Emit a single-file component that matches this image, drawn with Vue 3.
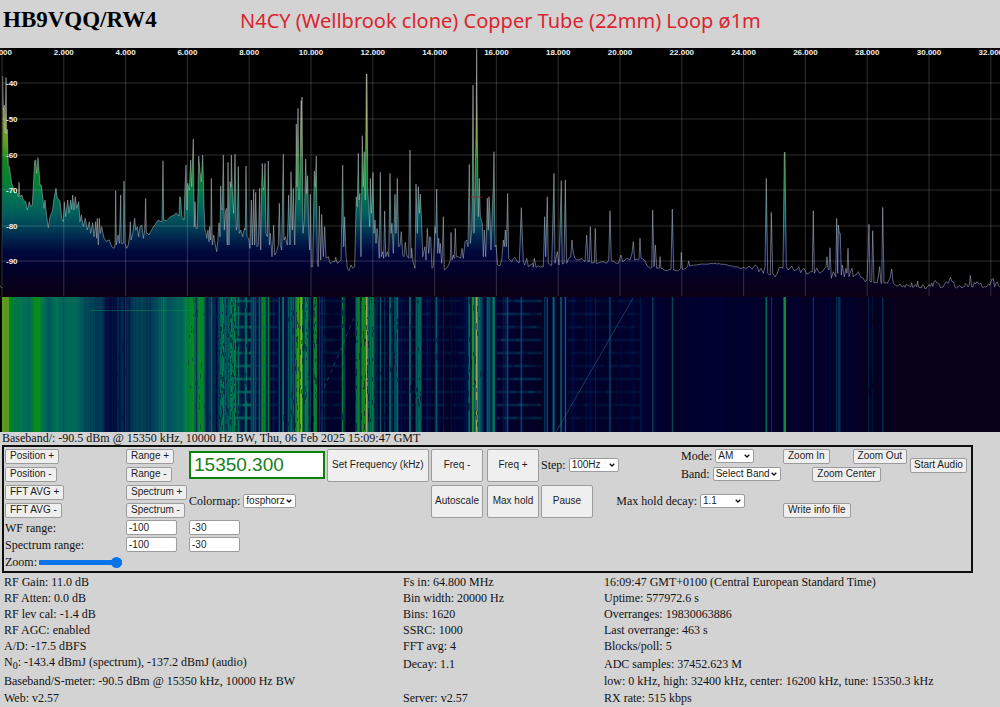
<script setup>
import { ref } from 'vue'

// Trace samples as x,y pairs on a grid three times finer than the plot, one string per third of the band.
const sections = [
  `8,228;10,330;13,315;16,400;18,232;20,400;22,388;25,500;28,500;35,550;45,580;50,575;55,590;57,547;60,590;66,585;70,600;77,605;82,630;88,605;92,620;97,615;100,560;104,482;107,480;110,520;114,473;117,510;120,555;124,555;127,580;132,625;135,600;140,650;145,683;150,650;158,630;162,595;168,565;172,595;180,605;185,655;190,665;193,605;197,650;203,600;207,640;212,600;215,628;218,585;222,630;226,590;230,625;236,605;240,665;244,645;250,680;256,655;262,690;268,665;272,700;278,668;282,710;287,665;290,715;292,655;295,735;298,655;301,700;305,680;312,715;320,725;328,720;335,740;342,745;345,735;347,572;349,735;354,705;358,730;362,585;364,730;370,730;372,543;375,730;380,745;385,735;389,705;391,665;393,720;398,700;404,655;407,690;412,680;416,710;420,680;425,675;430,715;434,690;437,595;439,700;447,705;455,690;465,675;475,660;486,665;489,482;491,660;500,662;515,648;530,640;537,648;539,590;542,595;545,650;552,660;555,560;558,495;561,630;563,550;568,570;572,480;575,560;580,417;583,680;585,605;588,685;592,685;596,468;600,515;604,545;608,465;612,620;615,690;618,700;620,715;624,690;627,725;629,680;632,720;634,535;637,735;641,705;645,730;650,755;653,725;657,668;660,710;662,558;664,625;667,630;670,465;673,690;676,640;679,625;682,735;684,487;687,735;690,545;693,560;694,465;697,570;701,640;705,463;709,690;712,680;715,500;718,700;722,690;728,710;733,685;736,690;738,498;741,710;746,715;750,745;754,600;757,735;761,568;764,735;767,577;771,740;775,735;779,565;782,750;785,560;787,490;790,570;793,560;795,490;798,700;802,710;805,483;808,735;811,700;816,770;821,675;824,765;830,755;835,735;838,610;841,735;845,750;848,560;850,463;852,720;856,710;862,735;866,585;870,735;873,515;877,690;880,565;884,735;887,600;889,372;891,560;894,325;897,600;899,575;903,302;905,310;906,291;909,700;913,660;917,477;920,580;923,527;926,690;929,750;931,583;934,800;938,800;943,513;946,560;949,468;952,790;955,800;958,618;962,780;965,643;970,770;974,680;978,775;985,770`,
  `0,790;8,785;15,785;17,772;22,790;28,785;33,780;38,495;41,740;44,650;48,765;52,805;57,812;63,795;68,805;74,800;79,590;82,620;85,460;87,600;90,580;93,770;97,407;100,560;103,455;106,600;109,222;111,222;113,560;117,640;119,680;121,535;124,640;126,600;129,517;132,700;135,660;138,730;141,685;144,710;148,775;151,517;154,770;158,755;161,775;164,633;167,770;172,755;176,770;180,520;183,700;186,670;190,760;195,583;198,700;202,535;206,740;210,735;214,695;218,765;222,770;226,727;230,765;236,775;240,450;243,775;245,745;249,785;255,805;258,552;262,700;265,560;268,640;271,582;275,670;278,770;285,740;288,780;292,685;296,760;299,710;302,712;306,805;310,800;315,680;317,700;320,567;323,760;326,715;329,760;331,730;335,790;337,760;340,650;343,810;350,805;356,795;361,780;363,697;366,780;370,765;373,775;376,685;379,770;385,770;392,775;396,745;400,775;405,725;410,720;414,740;416,600;418,493;421,730;425,690;427,560;429,255;432,700;435,560;438,400;440,146;442,400;445,650;448,535;451,650;457,670;460,770;463,690;467,770;470,680;472,595;475,690;477,590;480,640;483,750;487,628;490,560;492,455;495,740;498,735;503,795;510,797;515,780;520,720;523,740;526,690;529,740;533,580;536,775;545,785;555,772;562,785;568,788;574,623;580,785;584,795;590,775;595,800;602,795;608,790;610,802;613,775;618,802;625,797;632,802;640,800;644,650;647,770;652,590;655,790;665,797;672,520;675,790;682,755;687,795;694,542;697,792;702,790;706,540;710,790;716,775;722,770;726,720;730,760;735,775;745,780;755,775;765,785;770,705;774,785;778,785;781,680;785,790;793,788;796,685;799,790;808,788;820,785;830,790;836,780;840,632;844,780;855,788;865,790;873,765;878,785;890,775;900,780;906,760;910,725;914,780;922,778;927,778;930,715;933,775;942,780;950,795;960,805;965,803;968,630;972,800;976,735;980,805;988,805`,
  `0,770;3,805;12,810;22,812;33,808;37,627;41,810;55,812;62,805;64,757;67,808;78,805;83,798;86,783;89,798;105,795;120,793;140,793;165,790;190,793;210,797;240,805;260,805;270,800;276,808;286,795;292,800;297,815;303,805;310,820;315,800;319,535;323,820;331,825;334,637;338,820;345,830;352,820;358,802;369,805;373,457;375,457;379,800;385,810;395,798;402,812;410,810;416,800;422,818;432,805;440,822;452,815;457,815;460,632;463,820;470,805;480,820;490,812;498,800;501,770;504,805;507,810;510,743;514,835;520,815;527,830;530,655;533,820;535,675;538,700;541,700;544,825;547,795;553,830;558,805;561,820;564,745;567,830;576,805;580,830;588,825;595,815;602,830;610,835;615,845;621,840;624,770;627,673;630,845;635,845;638,692;642,848;652,848;659,800;663,850;665,850;668,622;672,850;682,850;690,835;695,807;700,850;710,858;720,852;735,862;752,860;755,848;758,862;770,860;773,843;776,862;800,862;830,848;845,862;858,845;865,850;871,832;876,845;885,860;910,860;928,855;931,826;935,860;955,850;970,862;990,855;1000,836;1004,860;1012,845;1020,862`
]

let seed = 417
const rand = () => {
  seed = (seed * 16807) % 2147483647
  return seed / 2147483647
}

const TOP = 48
const samples = []
sections.forEach((text, part) => {
  text.split(';').forEach((pair) => {
    const [px, py] = pair.split(',').map(Number)
    const x = (px + part * 990) / 3
    const y = py / 3 - TOP
    const last = samples[samples.length - 1]
    if (last && x - last[0] > 2.4) {
      const steps = Math.floor((x - last[0]) / 1.2)
      for (let i = 1; i < steps; i++) {
        const t = i / steps
        const noise = x > 895 ? 5 : x > 685 && x < 740 ? 0.7 : 1.6
        samples.push([last[0] + (x - last[0]) * t, last[1] + (y - last[1]) * t + (rand() - 0.6) * noise])
      }
    }
    samples.push([x, y])
  })
})
const tracePath = 'M' + samples.map(([x, y]) => `${x.toFixed(1)} ${y.toFixed(1)}`).join('L')
const fillPath = `${tracePath}L1000 249L2 249Z`

// Colour scale, indexed by height in the plot.
const scale = [
  [0, 190, 130, 130], [35, 170, 165, 110], [75, 140, 160, 45], [98, 85, 155, 30], [112, 10, 138, 28],
  [133, 4, 128, 50], [150, 0, 114, 82], [165, 0, 95, 92], [177, 0, 70, 88], [188, 0, 42, 78],
  [203, 0, 8, 60], [218, 0, 0, 46], [230, 5, 0, 32], [249, 12, 0, 20]
]
const colour = (level) => {
  const y = Math.max(0, Math.min(249, level))
  const i = Math.max(1, scale.findIndex((s) => s[0] >= y))
  const a = scale[i - 1]
  const b = scale[i]
  const t = (y - a[0]) / (b[0] - a[0])
  return `rgb(${[1, 2, 3].map((k) => Math.round(a[k] + (b[k] - a[k]) * t)).join(',')})`
}
const levelAt = (x) => {
  const i = samples.findIndex((s) => s[0] >= x)
  if (i < 1) return samples[i < 0 ? samples.length - 1 : 0][1]
  const [ax, ay] = samples[i - 1]
  const [bx, by] = samples[i]
  return ay + ((by - ay) * (x - ax)) / (bx - ax || 1)
}
const meanAt = (x, reach) => {
  let sum = 0
  for (let i = -2; i <= 2; i++) sum += levelAt(x + 0.5 + (i * reach) / 2)
  return sum / 5
}
const columns = []
for (let x = 2; x < 1000; x++) {
  const calm = x < 184
  const noise = x > 640 ? 4 : calm ? 5 : 12
  let level = meanAt(x, calm ? 3 : 0.5) + (rand() - 0.5) * noise
  if (x > 225 && x < 640 && level > 140) level += 8
  if (x >= 104 && x < 125) level += 8
  if (x > 893) level = 240
  if (x < 9) level = 92 + rand() * 8
  if (x >= 34 && x < 40) level = 113
  if (x === 163) level = 140
  columns.push({ x, fill: colour(level) })
}

// Short fading marks along busy channels and the regular pulse rows.
const marks = []
const speckle = (from, to, count, fill, opacity) => {
  for (let i = 0; i < count; i++) {
    marks.push({
      x: Math.round(from + rand() * (to - from)), y: Math.round(249 + rand() * 128),
      w: 1, h: Math.round(2 + rand() * 6), fill, opacity
    })
  }
}
const pulses = (from, to, y, h, fill, opacity) => {
  for (let x = from; x < to;) {
    const w = Math.min(to - x, Math.round(2 + rand() * 6))
    const o = opacity * (0.3 + rand() * 0.7)
    marks.push({ x, y, w, h, fill, opacity: o })
    marks.push({ x, y: y - 1, w, h: h + 2, fill, opacity: o * 0.5 })
    x += w
  }
}
speckle(218, 250, 240, '#001c40', 0.6)
speckle(282, 318, 150, '#00173c', 0.5)
speckle(320, 375, 160, '#00062c', 0.55)
speckle(380, 480, 180, '#000430', 0.5)
speckle(188, 218, 60, '#00204c', 0.4)
speckle(117, 125, 20, '#001038', 0.5)
speckle(865, 880, 40, '#04001c', 0.7)
for (let r = 0; r < 10; r++) {
  const y = 252 + r * 13
  pulses(234, 251, y, 2, '#00806a', 0.7)
  pulses(252, 278, y, 2, '#00605f', 0.25)
  pulses(319, 342, y, 2, '#004a66', 0.25)
  pulses(375, 465, y, 2, '#00506a', 0.2)
  pulses(497, 542, y, 2, '#00607a', 0.35)
  pulses(568, 640, y, 2, '#00406a', 0.22)
}
marks.push({ x: 90, y: 262, w: 105, h: 1, fill: '#078a50', opacity: 0.5 })

const mhz = Array.from({ length: 17 }, (_, i) => ({ x: 2 + i * 61.8, text: `${i * 2}.000` }))
const levels = [-40, -50, -60, -70, -80, -90].map((v, i) => ({ y: Math.round(35.3 + i * 35.6), text: v }))

const frequency = ref('15350.300')
const zoom = ref(10)
const ranges = ref({ wfMin: '-100', wfMax: '-30', spMin: '-100', spMax: '-30' })

const stats = [
  ['RF Gain: 11.0 dB', 'Fs in: 64.800 MHz', '16:09:47 GMT+0100 (Central European Standard Time)'],
  ['RF Atten: 0.0 dB', 'Bin width: 20000 Hz', 'Uptime: 577972.6 s'],
  ['RF lev cal: -1.4 dB', 'Bins: 1620', 'Overranges: 19830063886'],
  ['RF AGC: enabled', 'SSRC: 1000', 'Last overrange: 463 s'],
  ['A/D: -17.5 dBFS', 'FFT avg: 4', 'Blocks/poll: 5'],
  [': -143.4 dBmJ (spectrum), -137.2 dBmJ (audio)', 'Decay: 1.1', 'ADC samples: 37452.623 M'],
  ['Baseband/S-meter: -90.5 dBm @ 15350 kHz, 10000 Hz BW', '', 'low: 0 kHz, high: 32400 kHz, center: 16200 kHz, tune: 15350.3 kHz'],
  ['Web: v2.57', 'Server: v2.57', 'RX rate: 515 kbps']
]
</script>

<template>
  <main class="page">
    <header class="header">
      <h1>HB9VQQ/RW4</h1>
      <p class="antenna">N4CY (Wellbrook clone) Copper Tube (22mm) Loop ø1m</p>
    </header>

    <svg class="plot" viewBox="0 0 1000 384" role="img" aria-label="Spectrum and waterfall">
      <defs>
        <linearGradient id="level" gradientUnits="userSpaceOnUse" x1="0" y1="0" x2="0" y2="249">
          <stop v-for="s in scale" :key="s[0]" :offset="s[0] / 249" :stop-color="`rgb(${s[1]},${s[2]},${s[3]})`" />
        </linearGradient>
      </defs>
      <rect width="1000" height="384" fill="#000" />
      <path :d="fillPath" fill="url(#level)" />
      <path :d="tracePath" class="trace" />
      <path d="M0 238l2 2" class="trace" />
      <g class="grid">
        <line v-for="m in mhz" :key="m.text" :x1="m.x" :x2="m.x" y1="0" y2="248" />
        <line v-for="l in levels" :key="l.text" x1="2" x2="1000" :y1="l.y" :y2="l.y" />
      </g>
      <g class="tick-labels">
        <text v-for="m in mhz" :key="m.text" :x="m.x" y="7" text-anchor="middle">{{ m.text }}</text>
        <text v-for="l in levels" :key="l.text" x="6" :y="l.y + 3">{{ l.text }}</text>
      </g>
      <path d="M469 149h14" stroke="#a01818" stroke-opacity=".6" />
      <g shape-rendering="crispEdges">
        <rect v-for="c in columns" :key="c.x" :x="c.x" y="249" width="1" height="135" :fill="c.fill" />
        <rect v-for="(m, i) in marks" :key="i" :x="m.x" :y="m.y" :width="m.w" :height="m.h" :fill="m.fill" :fill-opacity="m.opacity" />
        <rect x="784" y="249" width="2" height="135" fill="#128a34" />
      </g>
      <path d="M633 250L556 384" stroke="#24708a" stroke-opacity=".55" fill="none" />
      <path d="M354 270L322 345" stroke="#24708a" stroke-opacity=".5" stroke-dasharray="4 4" fill="none" />
    </svg>

    <p class="status">Baseband/: -90.5 dBm @ 15350 kHz, 10000 Hz BW, Thu, 06 Feb 2025 15:09:47 GMT</p>

    <form class="panel" @submit.prevent>
      <button type="button" class="c1 r1">Position +</button>
      <button type="button" class="c1 r2">Position -</button>
      <button type="button" class="c1 r3">FFT AVG +</button>
      <button type="button" class="c1 r4">FFT AVG -</button>
      <label for="wf-min" class="c1 r5">WF range:</label>
      <label for="sp-min" class="c1 r6">Spectrum range:</label>
      <div class="c1 r7 zoom">
        <label for="zoom">Zoom:</label>
        <input id="zoom" v-model="zoom" type="range" min="0" max="10" />
      </div>

      <button type="button" class="c2 r1">Range +</button>
      <button type="button" class="c2 r2">Range -</button>
      <button type="button" class="c2 r3">Spectrum +</button>
      <button type="button" class="c2 r4">Spectrum -</button>
      <input id="wf-min" v-model="ranges.wfMin" class="c2 r5 number" type="text" />
      <input v-model="ranges.wfMax" class="c3 r5 number" type="text" aria-label="WF range maximum" />
      <input id="sp-min" v-model="ranges.spMin" class="c2 r6 number" type="text" />
      <input v-model="ranges.spMax" class="c3 r6 number" type="text" aria-label="Spectrum range maximum" />

      <input v-model="frequency" class="c3 upper frequency" type="text" aria-label="Frequency (kHz)" />
      <div class="c3 lower field">
        <label for="colormap">Colormap:</label>
        <select id="colormap" class="w53"><option>fosphorz</option></select>
      </div>

      <button type="button" class="c4 upper big">Set Frequency (kHz)</button>
      <button type="button" class="c5 upper big">Freq -</button>
      <button type="button" class="c6 upper big">Freq +</button>
      <button type="button" class="c5 lower big snug">Autoscale</button>
      <button type="button" class="c6 lower big snug">Max hold</button>
      <button type="button" class="c7 lower big">Pause</button>

      <div class="c7 upper field">
        <label for="step">Step:</label>
        <select id="step" class="w50"><option>100Hz</option></select>
      </div>
      <div class="decay lower field">
        <label for="decay">Max hold decay:</label>
        <select id="decay" class="w45"><option>1.1</option></select>
      </div>
      <div class="c8 r1 field">
        <label for="mode">Mode:</label>
        <select id="mode" class="w39"><option>AM</option></select>
      </div>
      <div class="c8 r2 field">
        <label for="band">Band:</label>
        <select id="band" class="w68"><option>Select Band</option></select>
      </div>

      <div class="c9 r1 pair">
        <button type="button">Zoom In</button>
        <button type="button">Zoom Out</button>
      </div>
      <button type="button" class="c9 r2 middle">Zoom Center</button>
      <button type="button" class="c9 r4">Write info file</button>
      <button type="button" class="c10 upper">Start Audio</button>
    </form>

    <section class="stats">
      <div v-for="(row, i) in stats" :key="i" class="stat-row">
        <span><template v-if="i === 5">N<sub>0</sub></template>{{ row[0] }}</span>
        <span>{{ row[1] }}</span>
        <span>{{ row[2] }}</span>
      </div>
    </section>
  </main>
</template>

<style>
body {
  background: #d3d3d3;
}
</style>

<style scoped>
.page {
  background: #d3d3d3;
  color: #111;
  font: 12px/16px "Liberation Serif", "Times New Roman", serif;
  overflow: hidden;
}
.header {
  display: flex;
  align-items: center;
  height: 42px;
  padding: 0 3px 6px;
}
h1 {
  width: 237px;
  margin: 0;
  padding-bottom: 2px;
  box-sizing: border-box;
  color: #000;
  font-size: 23px;
  line-height: 28px;
}
.antenna {
  margin: 0;
  color: #dc2430;
  font: 20px/28px "Noto Sans", "Open Sans", sans-serif;
  white-space: nowrap;
}
.plot {
  display: block;
  width: 100%;
  height: auto;
}
.trace {
  fill: none;
  stroke: #c4c8d2;
  stroke-opacity: .6;
  stroke-width: .8;
}
.grid line {
  stroke: #fff;
  stroke-opacity: .18;
}
.tick-labels text {
  fill: #eee;
  font: bold 8px "Liberation Sans", Arial, sans-serif;
}
.status {
  margin: 0;
  padding-left: 2px;
  line-height: 13px;
}
.panel {
  display: grid;
  grid-template-columns: 121px 63px 138px 104px 56px 54px 1fr 102px 127px 61px;
  grid-template-rows: 18px 18px 18px 18px 17px 17px 18px;
  align-items: center;
  justify-items: start;
  margin: 0 27px 0 2px;
  padding-left: 1px;
  border: 2px solid #0c0f0c;
}
.c1 { grid-column: 1; }
.c2 { grid-column: 2; }
.c3 { grid-column: 3; }
.c4 { grid-column: 4; }
.c5 { grid-column: 5; }
.c6 { grid-column: 6; }
.c7 { grid-column: 7; }
.c8 { grid-column: 8; }
.c9 { grid-column: 9; }
.c10 { grid-column: 10; }
.r1 { grid-row: 1; }
.r2 { grid-row: 2; }
.r3 { grid-row: 3; }
.r4 { grid-row: 4; }
.r5 { grid-row: 5; }
.r6 { grid-row: 6; }
.r7 { grid-row: 7; }
.upper { grid-row: 1 / 3; }
.lower { grid-row: 3 / 5; }
.decay {
  grid-column: 7 / 9;
  justify-self: end;
  margin-right: 38px;
}
button, select, input {
  box-sizing: border-box;
  margin: 0;
  border: 1px solid #9c9c9c;
  border-radius: 2px;
  color: #1c1c1c;
  font: 10px/12px "Liberation Sans", Arial, sans-serif;
}
button {
  height: 15px;
  padding: 0 4px;
  background: #efefef;
  white-space: nowrap;
}
.c10 {
  padding: 0 3px;
}
.big {
  min-width: 52px;
  height: 33px;
}
.snug {
  padding: 0 3px;
}
.number {
  width: 51px;
  height: 15px;
  padding: 0 2px;
  background: #fff;
}
.frequency {
  width: 136px;
  height: 28px;
  padding: 0 3px;
  border: 2px solid #0a820a;
  border-radius: 0;
  background: #fff;
  color: #16801a;
  font-size: 19px;
  line-height: 22px;
}
select {
  height: 14px;
  padding: 0 2px;
  appearance: none;
  background: #fff url("data:image/svg+xml,%3Csvg xmlns='http://www.w3.org/2000/svg' viewBox='0 0 6 4'%3E%3Cpath d='M.7.7 3 3 5.3.7' fill='none' stroke='%23111' stroke-width='1.3'/%3E%3C/svg%3E") no-repeat right 3px center / 6px 4px;
}
.field, .zoom {
  display: flex;
  align-items: center;
  gap: 3px;
  white-space: nowrap;
}
.w39 { width: 39px; }
.w45 { width: 45px; }
.w50 { width: 50px; }
.w53 { width: 53px; }
.w68 { width: 68px; }
.zoom {
  gap: 2px;
}
#zoom {
  width: 83px;
  height: 12px;
  border: 0;
  appearance: none;
  background: linear-gradient(#0b74ea, #0b74ea) center / 100% 5px no-repeat;
}
#zoom::-webkit-slider-thumb {
  width: 11px;
  height: 11px;
  appearance: none;
  border-radius: 50%;
  background: #0b74ea;
}
.pair {
  display: flex;
  justify-content: space-between;
  width: 124px;
}
.middle {
  justify-self: center;
}
.stats {
  padding: 1px 0 0 4px;
}
.stat-row {
  display: grid;
  grid-template-columns: 399fr 201fr 396fr;
  min-height: 16px;
  align-items: end;
  white-space: nowrap;
}
.stat-row:nth-child(n + 7) {
  min-height: 17px;
}
sub {
  font-size: 10px;
  line-height: 12px;
}
</style>
